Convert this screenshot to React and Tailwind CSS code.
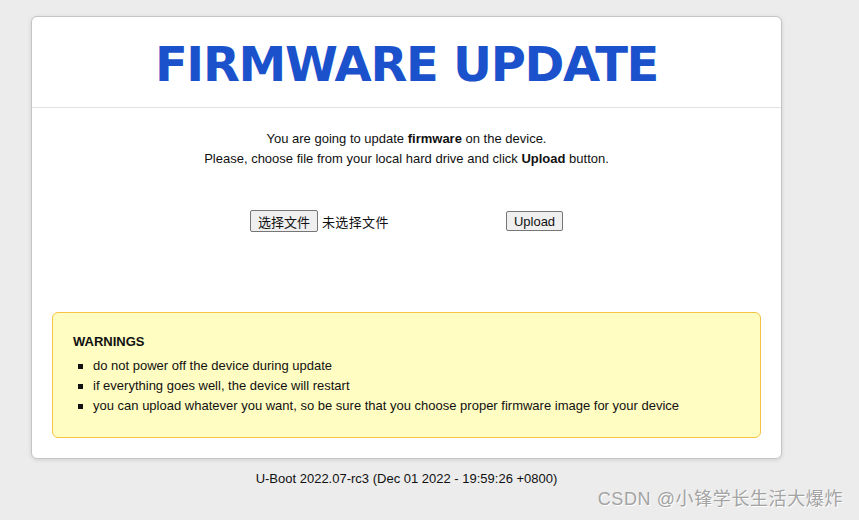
export default function App() {
  return (
    <div className="min-h-[520px] bg-[#ececec] pt-[16px] pl-[31px] font-['Liberation_Sans',Arial,sans-serif] text-[#111]">
      <div className="w-[751px] overflow-hidden rounded-[6px] border border-[#c4c4c4] bg-white shadow-[0_1px_4px_rgba(0,0,0,0.12)]">
        <div className="flex h-[91px] items-center justify-center border-b border-[#e2e2e2]">
          <h1 className="pt-[4px] font-['DejaVu_Sans',Verdana,sans-serif] text-[48px] font-bold leading-none tracking-[-1.3px] text-[#1b52cc]">
            FIRMWARE UPDATE
          </h1>
        </div>

        <div className="pt-[21px] text-center text-[13px] leading-[20px]">
          <p>
            You are going to update <b>firmware</b> on the device.
          </p>
          <p>
            Please, choose file from your local hard drive and click <b>Upload</b> button.
          </p>
        </div>

        <div className="mt-[41px] flex items-center justify-center">
          <div className="flex w-[250px] items-center">
            <span className="flex h-[22px] items-center rounded-[2px] border border-[#767676] bg-[#efefef] px-[7px] font-['Noto_Sans_CJK_SC',sans-serif] text-[13px] leading-none">
              选择文件
            </span>
            <span className="ml-[4px] font-['Noto_Sans_CJK_SC',sans-serif] text-[13px] tracking-[0.4px] leading-none">
              未选择文件
            </span>
          </div>
          <span className="ml-[6px] flex h-[20px] items-center rounded-[2px] border border-[#767676] bg-[#efefef] px-[7px] text-[13px] leading-none">
            Upload
          </span>
        </div>

        <div className="mx-[20px] mt-[80px] mb-[20px] rounded-[6px] border border-[#f6c444] bg-[#fffdc2] px-[20px] pt-[21px] pb-[21px]">
          <p className="text-[13px] font-bold leading-[16px]">WARNINGS</p>
          <ul className="mt-[6px] pl-[5px] text-[13px] leading-[20px]">
            <li className="flex items-center">
              <span className="mr-[10px] h-[5px] w-[5px] bg-[#111]"></span>
              do not power off the device during update
            </li>
            <li className="flex items-center">
              <span className="mr-[10px] h-[5px] w-[5px] bg-[#111]"></span>
              if everything goes well, the device will restart
            </li>
            <li className="flex items-center">
              <span className="mr-[10px] h-[5px] w-[5px] bg-[#111]"></span>
              you can upload whatever you want, so be sure that you choose proper firmware image for your device
            </li>
          </ul>
        </div>
      </div>

      <div className="mt-[12px] flex w-[751px] justify-center text-[13px] leading-[16px]">
        U-Boot 2022.07-rc3 (Dec 01 2022 - 19:59:26 +0800)
      </div>

      <div className="flex w-[812px] justify-end pt-[1px] font-['Liberation_Sans','Noto_Sans_CJK_SC',sans-serif] text-[18px] leading-[22px] tracking-[0.6px] text-[#a3a3a3] [text-shadow:1px_1px_0_#ffffff]">
        CSDN @小锋学长生活大爆炸
      </div>
    </div>
  );
}
